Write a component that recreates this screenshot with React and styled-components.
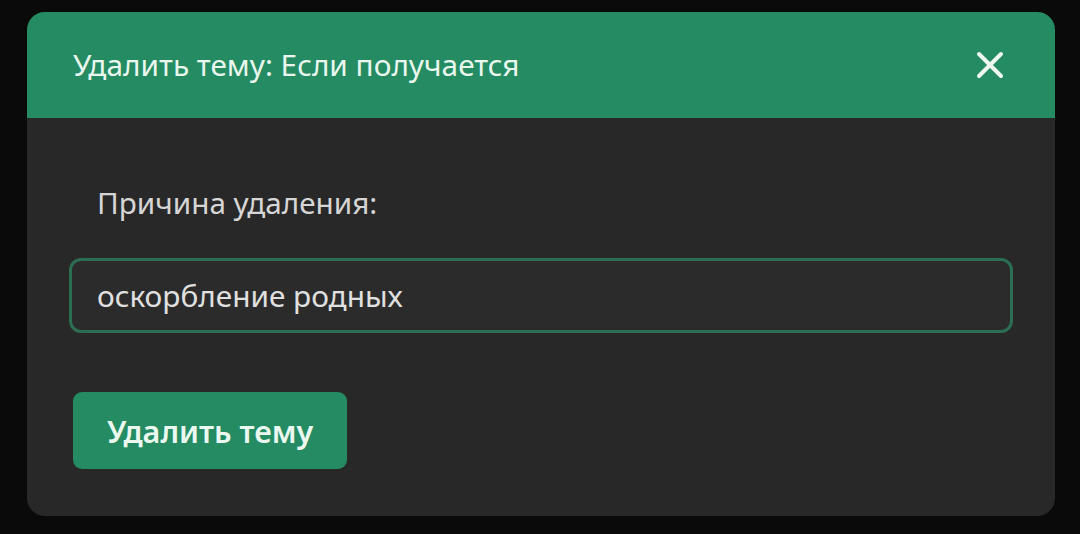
import React from "react";
import styled, { createGlobalStyle } from "styled-components";

const Global = createGlobalStyle`
    html, body{
        margin: 0;
        background: #0a0a0a;
        font-family: "Noto Sans", "Open Sans", sans-serif;
    }
`

const Page = styled.div`
    padding: 12px 25px 18px 27px;
`

const Modal = styled.div`
    width: 1028px;
    height: 504px;
    background: #282828;
    border-radius: 18px;
    overflow: hidden;
    display: flex;
    flex-direction: column;
`

const Header = styled.div`
    height: 106px;
    background: #248b62;
    display: flex;
    align-items: center;
    justify-content: space-between;
    padding: 0 51px 0 46px;
    box-sizing: border-box;
    h2{
        margin: 0 0 2px;
        font-size: 29.8px;
        font-weight: 400;
        color: #e9f7ee;
    }
    button{
        background: none;
        border: 0;
        padding: 0;
        display: flex;
        cursor: pointer;
    }
`

const Body = styled.div`
    padding: 65px 42px 0 42px;
    display: flex;
    flex-direction: column;
`

const Label = styled.label`
    color: #d6d6d6;
    font-size: 29.7px;
    margin-left: 28px;
    line-height: 40px;
`

const Input = styled.input`
    margin-top: 35px;
    height: 75px;
    box-sizing: border-box;
    width: 944px;
    background: #2b2b2b;
    border: 3px solid #2c6e53;
    border-radius: 12px;
    padding: 0 25px;
    color: #e0e0e0;
    font: 400 29.8px "Noto Sans", "Open Sans", sans-serif;
    outline: none;
`

const Button = styled.button`
    margin: 59px 0 0 4px;
    align-self: flex-start;
    height: 77px;
    padding: 0 34px;
    background: #248b62;
    color: #eaf8ef;
    border: 0;
    border-radius: 9px;
    font: 600 30.6px "Noto Sans", "Open Sans", sans-serif;
    cursor: pointer;
`

const Close = () =>
    <svg width="28" height="28" viewBox="0 0 28 28">
        <path d="M3 3 L25 25 M25 3 L3 25" stroke="#eef8f1" strokeWidth="4" strokeLinecap="round"/>
    </svg>

const App = () =>
    <>
        <Global/>
        <Page>
            <Modal>
                <Header>
                    <h2>Удалить тему: Если получается</h2>
                    <button><Close/></button>
                </Header>
                <Body>
                    <Label>Причина удаления:</Label>
                    <Input defaultValue="оскорбление родных"/>
                    <Button>Удалить тему</Button>
                </Body>
            </Modal>
        </Page>
    </>

export default App
